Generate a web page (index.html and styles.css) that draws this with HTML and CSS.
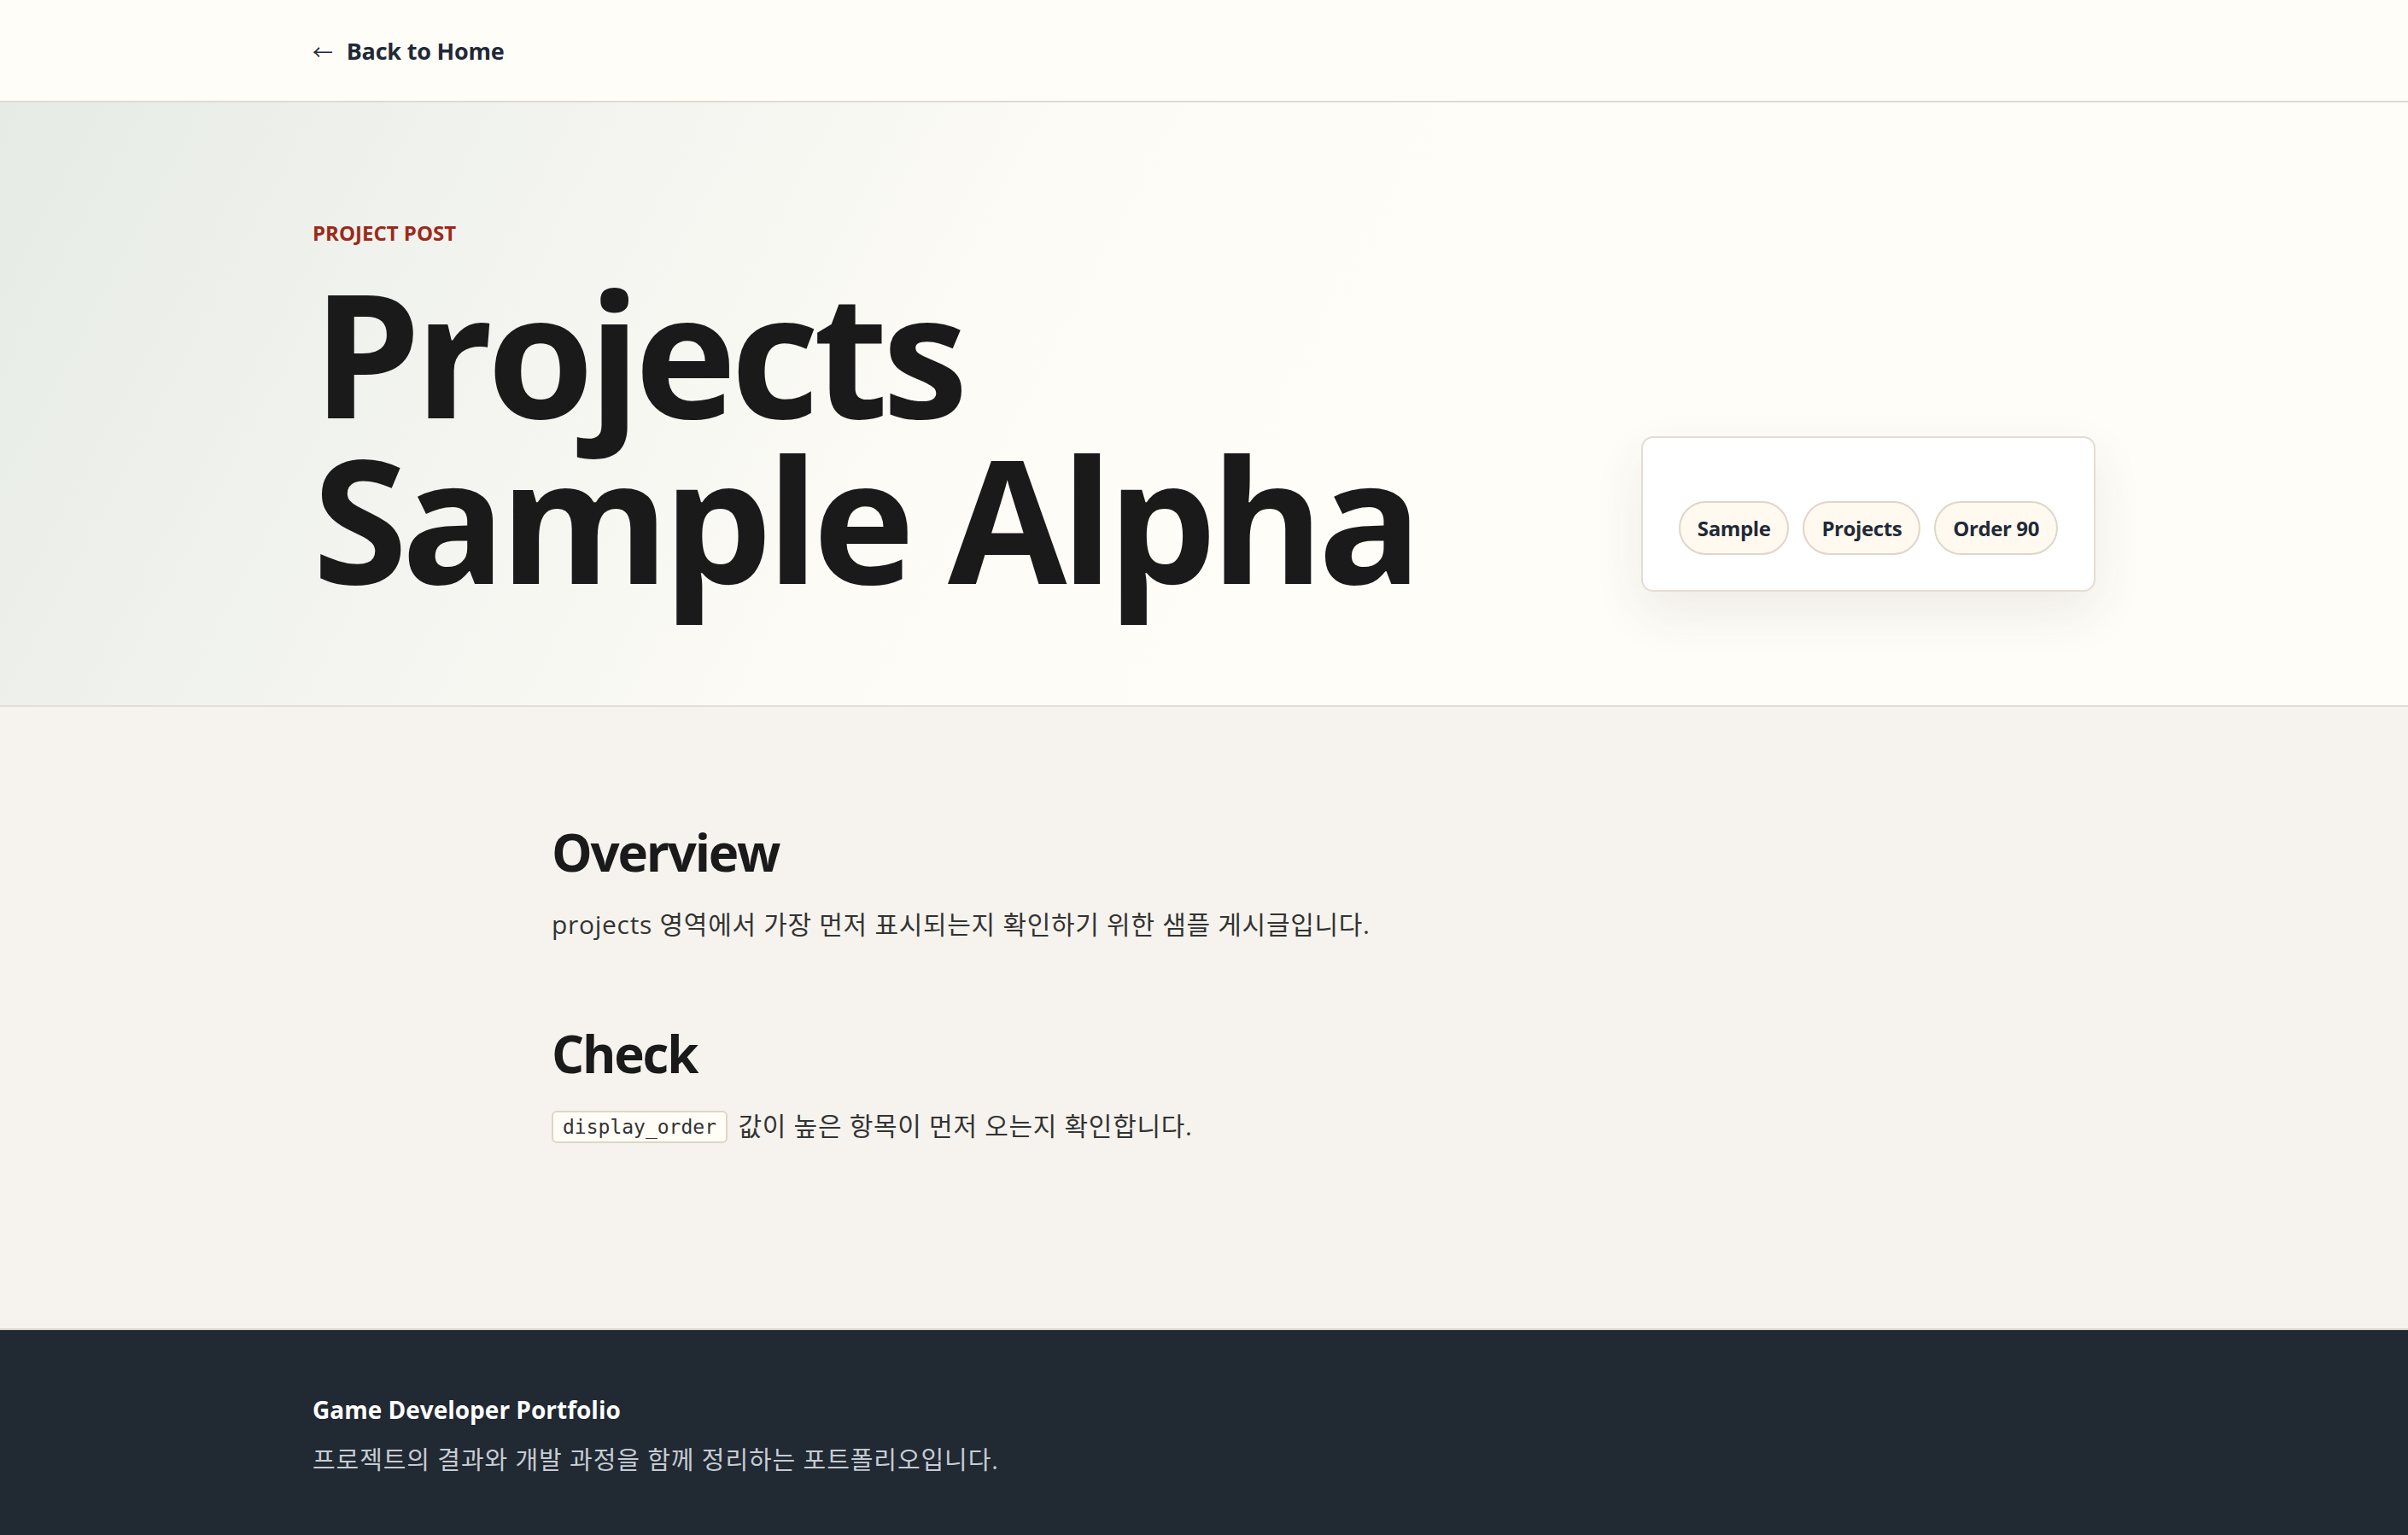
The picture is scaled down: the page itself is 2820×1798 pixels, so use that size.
FILE: index.html
```html
<!DOCTYPE html>
<html lang="ko">
<head>
<meta charset="utf-8">
<title>Projects Sample Alpha</title>
<link rel="stylesheet" href="styles.css">
</head>
<body>
<header class="topbar">
  <div class="container">
    <a class="back-link" href="#"><span class="arrow">←</span> Back to Home</a>
  </div>
</header>
<section class="hero">
  <div class="container hero-grid">
    <div class="hero-text">
      <p class="eyebrow">PROJECT POST</p>
      <h1 class="hero-title">Projects<br>Sample Alpha</h1>
    </div>
    <aside class="meta-card">
      <ul class="tag-list">
        <li class="tag">Sample</li>
        <li class="tag">Projects</li>
        <li class="tag">Order 90</li>
      </ul>
    </aside>
  </div>
</section>
<main class="article-wrap">
  <article class="article">
    <h2 class="article-h2">Overview</h2>
    <p class="article-p">projects 영역에서 가장 먼저 표시되는지 확인하기 위한 샘플 게시글입니다.</p>
    <h2 class="article-h2 spaced">Check</h2>
    <p class="article-p"><code class="inline-code">display_order</code> 값이 높은 항목이 먼저 오는지 확인합니다.</p>
  </article>
</main>
<footer class="footer">
  <div class="container">
    <p class="footer-title">Game Developer Portfolio</p>
    <p class="footer-sub">프로젝트의 결과와 개발 과정을 함께 정리하는 포트폴리오입니다.</p>
  </div>
</footer>
</body>
</html>
```
FILE: styles.css
```css
* { box-sizing: border-box; }
html, body { margin: 0; padding: 0; }
html { background: #212933; }
body {
  font-family: "Open Sans", "Noto Sans CJK KR", sans-serif;
  color: #1a1a1a;
  background: #f6f3ee;
}
.container {
  width: 2088px;
  margin: 0 auto;
}
.topbar {
  height: 120px;
  background: #fffdf8;
  border-bottom: 2px solid #e0dbd2;
  display: flex;
  align-items: center;
}
.back-link {
  font-size: 27px;
  font-weight: 700;
  color: #1f2937;
  text-decoration: none;
  letter-spacing: -0.2px;
}
.arrow {
  font-weight: 400;
  font-size: 24px;
  margin-right: 9px;
}
.hero {
  background: linear-gradient(118deg, #e6ebe5 0%, #f3f4ef 22%, #fcfbf6 40%, #fffdf8 55%);
  border-bottom: 2px solid #e3ded5;
  padding: 134px 0 123px;
}
.hero-grid {
  display: grid;
  grid-template-columns: 1fr auto;
  align-items: end;
}
.eyebrow {
  margin: 0;
  font-size: 24px;
  line-height: 37px;
  font-weight: 700;
  color: #9b2a1a;
  letter-spacing: 0;
}
.hero-title {
  margin: 24px 0 0;
  font-size: 202px;
  line-height: 0.96;
  font-weight: 700;
  letter-spacing: -7px;
  color: #1a1a1a;
}
.meta-card {
  background: #ffffff;
  border: 2px solid #e3ddd3;
  border-radius: 14px;
  padding: 74px 42px 41px;
  margin-bottom: 10px;
  box-shadow: 0 24px 60px rgba(70, 60, 40, 0.09);
}
.tag-list {
  list-style: none;
  margin: 0;
  padding: 0;
  display: flex;
  gap: 16px;
}
.tag {
  height: 63px;
  display: flex;
  align-items: center;
  white-space: nowrap;
  padding: 0 20px;
  border: 2px solid #ded6ca;
  border-radius: 999px;
  background: #fff9ef;
  font-size: 24px;
  font-weight: 700;
  color: #1f2a37;
  letter-spacing: -0.4px;
}
.article-wrap {
  background: #f6f3ee;
  padding: 134px 0 212px;
}
.article {
  width: 1528px;
  margin: 0 auto;
}
.article-h2 {
  margin: 0 0 23px;
  font-size: 60px;
  line-height: 1.2;
  font-weight: 700;
  letter-spacing: -2.2px;
  color: #1a1a1a;
}
.article-h2.spaced { margin-top: 90px; }
.article-p {
  margin: 0;
  font-size: 30px;
  line-height: 51px;
  color: #333333;
  letter-spacing: 0.7px;
}
.inline-code {
  display: inline-block;
  font-family: "DejaVu Sans Mono", monospace;
  font-size: 23px;
  line-height: 34px;
  padding: 0 11px;
  border: 2px solid #ddd5c8;
  border-radius: 6px;
  background: #fffdf6;
  color: #333;
  letter-spacing: 0;
  vertical-align: 2px;
  margin-right: 4px;
}
.footer {
  background: #212933;
  border-top: 2px solid #d9d3c9;
  padding: 72px 0 74px;
}
.footer-title {
  margin: 0;
  font-size: 28px;
  line-height: 43px;
  font-weight: 700;
  color: #ffffff;
  letter-spacing: 0;
}
.footer-sub {
  margin: 15px 0 0;
  font-size: 29px;
  line-height: 43px;
  color: #c7ccd3;
  letter-spacing: 0.9px;
}
```
